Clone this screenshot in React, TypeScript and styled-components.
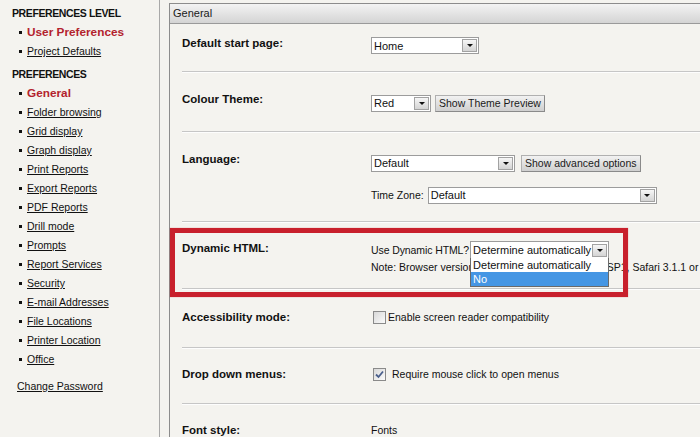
import React from "react";
import styled, { createGlobalStyle } from "styled-components";

const GlobalStyle = createGlobalStyle`
  html, body {
    margin: 0;
    padding: 0;
    background: #f4f3ef;
    overflow: hidden;
  }
  body {
    font-family: "Liberation Sans", Arial, sans-serif;
    font-size: 10.5px;
    color: #111;
  }
`;

const levelLinks = [
  { label: "User Preferences", active: true },
  { label: "Project Defaults", active: false },
];

const prefLinks = [
  "General",
  "Folder browsing",
  "Grid display",
  "Graph display",
  "Print Reports",
  "Export Reports",
  "PDF Reports",
  "Drill mode",
  "Prompts",
  "Report Services",
  "Security",
  "E-mail Addresses",
  "File Locations",
  "Printer Location",
  "Office",
];

const Sidebar: React.FC = () => (
  <Side>
    <SectionTitle>PREFERENCES LEVEL</SectionTitle>
    <NavList>
      {levelLinks.map((item) => (
        <NavItem key={item.label} $active={item.active}>
          {item.label}
        </NavItem>
      ))}
    </NavList>
    <SectionTitle $spaced>PREFERENCES</SectionTitle>
    <NavList>
      {prefLinks.map((label, i) => (
        <NavItem key={label} $active={i === 0}>
          {label}
        </NavItem>
      ))}
    </NavList>
    <PlainLink>Change Password</PlainLink>
  </Side>
);

type SelectProps = { value: string; width: number; tall?: boolean; children?: React.ReactNode };

const Select: React.FC<SelectProps> = ({ value, width, tall, children }) => (
  <SelectBox $width={width} $tall={tall}>
    <SelectValue>{value}</SelectValue>
    <Arrow />
    {children}
  </SelectBox>
);

const Checkbox: React.FC<{ checked?: boolean; label: string; gap: number }> = ({ checked, label, gap }) => (
  <CheckRow $gap={gap}>
    <CheckBox>
      {checked && (
        <svg width="9" height="9" viewBox="0 0 9 9">
          <path d="M1 4.5 L3.5 7 L8 1.5" fill="none" stroke="#4a5f8c" strokeWidth="1.8" />
        </svg>
      )}
    </CheckBox>
    {label}
  </CheckRow>
);

export default function App() {
  return (
    <>
      <GlobalStyle />
      <Page>
        <Sidebar />
        <Main>
          <Panel>
            <PanelHeader>General</PanelHeader>

            <Row $pt={12} $pb={17}>
              <Label>Default start page:</Label>
              <Content $offset={1}>
                <Select value="Home" width={108} />
              </Content>
            </Row>

            <Row $pt={19} $pb={19}>
              <Label>Colour Theme:</Label>
              <Content $offset={3}>
                <Line>
                  <Select value="Red" width={60} />
                  <Button>Show Theme Preview</Button>
                </Line>
              </Content>
            </Row>

            <Row $pt={19} $pb={17}>
              <Label>Language:</Label>
              <Content $offset={3}>
                <Line $gap={6}>
                  <Select value="Default" width={144} />
                  <Button>Show advanced options</Button>
                </Line>
                <Line $gap={4} $top={15}>
                  <span>Time Zone:</span>
                  <Select value="Default" width={229} />
                </Line>
              </Content>
            </Row>

            <Row $pt={18} $pb={14}>
              <Label>Dynamic HTML:</Label>
              <Content $offset={0}>
                <Line $gap={0}>
                  <Tight>Use Dynamic HTML?</Tight>
                  <Select value="Determine automatically" width={139} tall>
                    <DropList>
                      <DropItem>Determine automatically</DropItem>
                      <DropItem $selected>No</DropItem>
                    </DropList>
                  </Select>
                </Line>
                <Note>
                  Note: Browser version must be Internet Explorer 6 SP1, Safari 3.1.1 or later.
                </Note>
              </Content>
            </Row>

            <Row $pt={20} $pb={22}>
              <Label>Accessibility mode:</Label>
              <Content $offset={0}>
                <Checkbox label="Enable screen reader compatibility" gap={2} />
              </Content>
            </Row>

            <Row $pt={18} $pb={21}>
              <Label>Drop down menus:</Label>
              <Content $offset={0}>
                <Checkbox checked label="Require mouse click to open menus" gap={6} />
              </Content>
            </Row>

            <Row $pt={18} $pb={20} $last>
              <Label>Font style:</Label>
              <Content $offset={0}>
                <Line>Fonts</Line>
              </Content>
            </Row>
          </Panel>
        </Main>
        <Highlight />
      </Page>
    </>
  );
}

const Page = styled.div`
  position: relative;
  display: flex;
  width: 700px;
  height: 437px;
  overflow: hidden;
`;

const Side = styled.nav`
  width: 147px;
  flex: none;
  padding: 4px 0 0 12px;
  border-right: 1px solid #a8a8a8;
`;

const SectionTitle = styled.div<{ $spaced?: boolean }>`
  font-weight: bold;
  font-size: 10.5px;
  letter-spacing: -0.4px;
  line-height: 19px;
  margin-top: ${(p) => (p.$spaced ? "4px" : "0")};
  color: #111;
`;

const NavList = styled.ul`
  list-style: none;
  margin: 0;
  padding: 0 0 0 7px;
`;

const NavItem = styled.li<{ $active?: boolean }>`
  line-height: 19px;
  white-space: nowrap;
  color: ${(p) => (p.$active ? "#b3222d" : "#111")};
  font-weight: ${(p) => (p.$active ? "bold" : "normal")};
  font-size: ${(p) => (p.$active ? "11.8px" : "10.5px")};
  text-decoration: ${(p) => (p.$active ? "none" : "underline")};

  &::before {
    content: "";
    display: inline-block;
    width: 3px;
    height: 3px;
    background: #111;
    vertical-align: middle;
    margin: 0 5px 1px 0;
  }
`;

const PlainLink = styled.div`
  margin: 8px 0 0 5px;
  line-height: 19px;
  text-decoration: underline;
  color: #111;
`;

const Main = styled.main`
  flex: 1;
  min-width: 0;
  padding: 3px 0 0 9px;
`;

const Panel = styled.section`
  height: 100%;
  border: 1px solid #8c8c8c;
  border-right: none;
  border-bottom: none;
  overflow: hidden;
`;

const PanelHeader = styled.div`
  height: 19px;
  line-height: 19px;
  padding-left: 3px;
  font-size: 11px;
  color: #1a1a1a;
  background: linear-gradient(#f3f3f3, #d4d4d4);
  border-bottom: 1px solid #9a9a9a;
`;

const Row = styled.div<{ $pt: number; $pb: number; $last?: boolean }>`
  display: grid;
  grid-template-columns: 189px 1fr;
  margin-left: 12px;
  padding: ${(p) => p.$pt}px 0 ${(p) => p.$pb}px;
  border-bottom: ${(p) => (p.$last ? "none" : "1px solid #c6c6c6")};
  box-shadow: ${(p) => (p.$last ? "none" : "0 1px 0 #fdfdfd")};
  margin-bottom: 1px;
`;

const Label = styled.div`
  font-weight: bold;
  font-size: 11.5px;
  line-height: 15px;
  color: #111;
`;

const Content = styled.div<{ $offset: number }>`
  margin-top: ${(p) => p.$offset}px;
  min-width: 0;
`;

const Line = styled.div<{ $gap?: number; $top?: number }>`
  display: flex;
  align-items: center;
  gap: ${(p) => p.$gap ?? 4}px;
  margin-top: ${(p) => p.$top ?? 0}px;
  white-space: nowrap;
  line-height: 15px;
`;

const Tight = styled.span`
  letter-spacing: -0.1px;
  margin-right: 1px;
`;

const SelectBox = styled.div<{ $width: number; $tall?: boolean }>`
  position: relative;
  display: flex;
  align-items: center;
  box-sizing: border-box;
  width: ${(p) => p.$width}px;
  height: ${(p) => (p.$tall ? 18 : 17)}px;
  background: #fff;
  border: 1px solid #9c9c9c;
  flex: none;
`;

const SelectValue = styled.span`
  flex: 1;
  padding-left: 2px;
  font-size: 11px;
  overflow: hidden;
  white-space: nowrap;
  color: #111;
`;

const Arrow = styled.span`
  position: relative;
  box-sizing: border-box;
  width: 15px;
  height: 13px;
  margin-right: 1px;
  background: linear-gradient(#f6f6f6, #d4d4d4);
  border: 1px solid #a2a2a2;

  &::after {
    content: "";
    position: absolute;
    left: 3.5px;
    top: 4px;
    border-left: 3px solid transparent;
    border-right: 3px solid transparent;
    border-top: 3.5px solid #111;
  }
`;

const DropList = styled.div`
  position: absolute;
  left: -1px;
  right: -1px;
  top: 100%;
  background: #fff;
  border: 1px solid #6a6a6a;
  border-top: none;
  z-index: 2;
`;

const DropItem = styled.div<{ $selected?: boolean }>`
  height: 14px;
  line-height: 14px;
  padding-left: 2px;
  font-size: 11px;
  color: ${(p) => (p.$selected ? "#fff" : "#111")};
  background: ${(p) => (p.$selected ? "#4596e4" : "#fff")};
`;

const Note = styled.div`
  margin-top: 1px;
  line-height: 14px;
  white-space: nowrap;
`;

const Button = styled.button`
  height: 17px;
  padding: 0 3px;
  font: inherit;
  color: #1a1a1a;
  background: linear-gradient(#f2f2f2, #cfcfcf);
  border: 1px solid #b0b0b0;
  border-right-color: #8a8a8a;
  border-bottom-color: #8a8a8a;
  border-radius: 0;
  white-space: nowrap;
`;

const CheckRow = styled.label<{ $gap: number }>`
  display: flex;
  align-items: center;
  gap: ${(p) => p.$gap}px;
  line-height: 15px;
  padding-left: 2px;
  white-space: nowrap;
`;

const CheckBox = styled.span`
  box-sizing: border-box;
  width: 13px;
  height: 13px;
  display: flex;
  align-items: center;
  justify-content: center;
  border: 1px solid #8a8a8a;
  background: linear-gradient(135deg, #d8d8d8, #fbfbfb);
`;

const Highlight = styled.div`
  position: absolute;
  left: 170px;
  top: 228px;
  width: 458px;
  height: 69px;
  box-sizing: border-box;
  border: 5px solid #c8202c;
  box-shadow: 0 0 1px rgba(200, 32, 44, 0.5);
  pointer-events: none;
`;
